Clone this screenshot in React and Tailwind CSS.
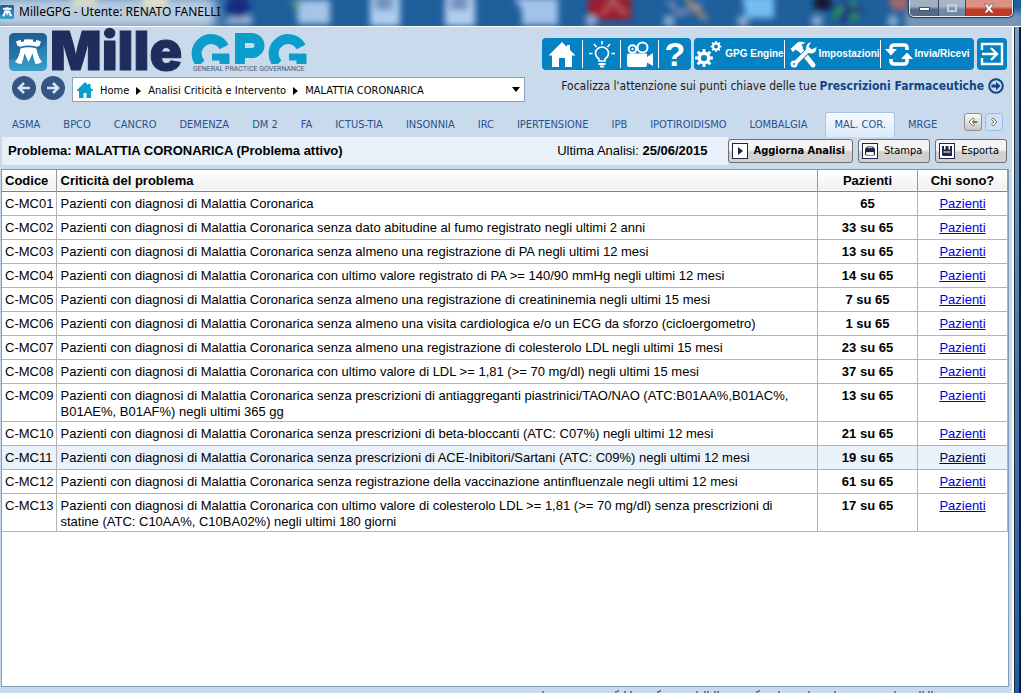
import React from "react";

const TABS = [
  "ASMA", "BPCO", "CANCRO", "DEMENZA", "DM 2", "FA", "ICTUS-TIA", "INSONNIA", "IRC",
  "IPERTENSIONE", "IPB", "IPOTIROIDISMO", "LOMBALGIA", "MAL. COR.", "MRGE",
];

const ROWS = [
  ["C-MC01", "Pazienti con diagnosi di Malattia Coronarica", "65"],
  ["C-MC02", "Pazienti con diagnosi di Malattia Coronarica senza dato abitudine al fumo registrato negli ultimi 2 anni", "33 su 65"],
  ["C-MC03", "Pazienti con diagnosi di Malattia Coronarica senza almeno una registrazione di PA negli ultimi 12 mesi", "13 su 65"],
  ["C-MC04", "Pazienti con diagnosi di Malattia Coronarica con ultimo valore registrato di PA >= 140/90 mmHg negli ultimi 12 mesi", "14 su 65"],
  ["C-MC05", "Pazienti con diagnosi di Malattia Coronarica senza almeno una registrazione di creatininemia negli ultimi 15 mesi", "7 su 65"],
  ["C-MC06", "Pazienti con diagnosi di Malattia Coronarica senza almeno una visita cardiologica e/o un ECG da sforzo (cicloergometro)", "1 su 65"],
  ["C-MC07", "Pazienti con diagnosi di Malattia Coronarica senza almeno una registrazione di colesterolo LDL negli ultimi 15 mesi", "23 su 65"],
  ["C-MC08", "Pazienti con diagnosi di Malattia Coronarica con ultimo valore di LDL >= 1,81 (>= 70 mg/dl) negli ultimi 15 mesi", "37 su 65"],
  ["C-MC09", "Pazienti con diagnosi di Malattia Coronarica senza prescrizioni di antiaggreganti piastrinici/TAO/NAO (ATC:B01AA%,B01AC%, B01AE%, B01AF%) negli ultimi 365 gg", "13 su 65"],
  ["C-MC10", "Pazienti con diagnosi di Malattia Coronarica senza prescrizioni di beta-bloccanti (ATC: C07%) negli ultimi 12 mesi", "21 su 65"],
  ["C-MC11", "Pazienti con diagnosi di Malattia Coronarica senza prescrizioni di ACE-Inibitori/Sartani (ATC: C09%) negli ultimi 12 mesi", "19 su 65"],
  ["C-MC12", "Pazienti con diagnosi di Malattia Coronarica senza registrazione della vaccinazione antinfluenzale negli ultimi 12 mesi", "61 su 65"],
  ["C-MC13", "Pazienti con diagnosi di Malattia Coronarica con ultimo valore di colesterolo LDL >= 1,81 (>= 70 mg/dl) senza prescrizioni di statine (ATC: C10AA%, C10BA02%) negli ultimi 180 giorni", "17 su 65"],
];

function TowerIcon({ className, id }) {
  return (
    <svg viewBox="0 0 38 38" className={`shrink-0 ${className}`} aria-hidden="true">
      <defs>
        <linearGradient id={id} x1="0" y1="0" x2="0" y2="1">
          <stop offset="0" stopColor="#2068a0" />
          <stop offset="1" stopColor="#3a9fcb" />
        </linearGradient>
      </defs>
      <rect width="38" height="38" rx="5" fill={`url(#${id})`} />
      <path d="M0 27C12 26 30 20 38 9V5a5 5 0 0 0-5-5H5a5 5 0 0 0-5 5z" fill="#1a568c" opacity=".4" />
      <path
        d="M7 8.500q2.500-1.500 5-1.500v2l3-.6V6.600q4.500-.9 9 0v1.800l3 .6V7q2.500 0 5 1.500l-1.500 4.500-3 .8q-8-2.400-16 0l-3-.8z"
        fill="#fff"
      />
      <path d="M11.500 15.500q8-2.600 16 0 1 8 5.500 13.500-3 2-6.500 2-2-5-3-10.500L19.500 29l-4-8.500q-1 5.500-3 10.500-3.500 0-6.500-2 4.500-5.500 5.500-13.500z" fill="#fff" />
    </svg>
  );
}

function DesktopBlur() {
  return (
    <svg className="absolute inset-0 h-full w-full" preserveAspectRatio="none" viewBox="0 0 1021 26" aria-hidden="true">
      <defs>
        <filter id="soft" x="-20%" y="-50%" width="140%" height="200%"><feGaussianBlur stdDeviation="3" /></filter>
        <filter id="glow" x="-20%" y="-100%" width="140%" height="300%"><feGaussianBlur stdDeviation="8" /></filter>
      </defs>
      <rect width="1021" height="26" fill="#1f5f9c" />
      <rect x="-10" y="-4" width="226" height="34" fill="#b2c9df" filter="url(#glow)" />
      <g filter="url(#soft)">
        <rect x="-6" y="2" width="218" height="21" fill="#b9cde0" opacity=".8" />
        <rect x="72" y="-4" width="24" height="12" fill="#d8dcc8" />
        <rect x="142" y="-4" width="26" height="12" fill="#e0dfc9" />
        <path d="M222 24h30v-8h-20z" fill="#9fb9d8" />
        <ellipse cx="238" cy="7" rx="12" ry="11" fill="#172c80" />
        <path d="M296 0h34v24h-32z" fill="#a5c4e9" />
        <path d="M288 2h14l-3 8z" fill="#66a075" />
        <rect x="370" y="-4" width="30" height="30" fill="#b0cef0" />
        <rect x="375" y="-2" width="18" height="12" fill="#7190bd" />
        <rect x="445" y="-4" width="30" height="30" fill="#b0cef0" />
        <rect x="450" y="-2" width="18" height="12" fill="#7190bd" />
        <path d="M514-2h44v27h-36V10z" fill="#a3c3ea" />
        <rect x="588" y="-4" width="43" height="24" fill="#9c1f2a" />
        <path d="M602 14q8-8 11-15 4 11 14 14" stroke="#c66a74" strokeWidth="2.500" fill="none" />
        <path d="M586 16h10v10h-10zM664 16h10v10h-10zM738 16h10v10h-10zM812 16h10v10h-10zM888 16h10v10h-10z" fill="#8fafd2" />
        <path d="M668 0l12 14 22-10" stroke="#7d86b4" strokeWidth="5" fill="none" />
        <path d="M686-2l20 22" stroke="#b08c70" strokeWidth="5" />
        <path d="M742-4h32v22h-28z" fill="#75bdf1" />
        <rect x="814" y="-4" width="17" height="14" fill="#14182e" />
        <ellipse cx="846" cy="12" rx="16" ry="11" fill="#23377f" />
        <path d="M834 18l8-12M850 20l8-6M850 4h6" stroke="#2ba153" strokeWidth="5" />
        <path d="M888-4h20v14h-16z" fill="#a8686c" />
        <rect x="905" y="12" width="120" height="20" fill="#7595b8" />
      </g>
    </svg>
  );
}

function TitleBar() {
  return (
    <header className="relative flex h-[27px] shrink-0 overflow-hidden border-b border-white">
      <DesktopBlur />
      <div className="relative flex flex-1 items-center gap-1 pb-[2px] font-['Noto_Sans',sans-serif] text-[12px] leading-4 text-black">
        <TowerIcon className="h-[14px] w-[14px]" id="towerSmall" />
        <h1 className="whitespace-nowrap pl-px">MilleGPG - Utente: RENATO FANELLI</h1>
      </div>
      <div className="relative mr-2 flex h-[17px] overflow-hidden rounded-b-[5px] border border-t-0 border-[#e3edf6] shadow-[0_0_1px_1px_#26364a]">
        <button aria-label="Riduci a icona" className="flex w-[29px] items-end justify-center border-r border-[#3c4d61] bg-linear-to-b from-[#9fb0c2] from-40% to-[#536a84] to-60% pb-[5px]">
          <span className="h-[4px] w-[11px] border border-[#44505e] bg-white" />
        </button>
        <button aria-label="Ingrandisci" className="flex w-[27px] items-center justify-center border-r border-[#3c4d61] bg-linear-to-b from-[#a6b6c8] from-40% to-[#7189a4] to-60%">
          <span className="h-2 w-[10px] border-2 border-[#c3cfdb]" />
        </button>
        <button aria-label="Chiudi" className="flex w-[46px] items-center justify-center bg-linear-to-b from-[#dd9384] from-40% to-[#bf3a22] to-60%">
          <svg viewBox="0 0 12 10" className="h-[11px] w-3" aria-hidden="true">
            <path d="M1 .5h3l2 2.600L8 .5h3L7.800 5 11 9.500H8L6 7 4 9.500H1L4.200 5z" fill="#fff" stroke="#5a3a3a" strokeWidth=".6" />
          </svg>
        </button>
      </div>
    </header>
  );
}

function Logo() {
  return (
    <div className="flex h-[38px] w-[300px] gap-1" role="img" aria-label="MilleGPG">
      <TowerIcon className="h-[38px] w-[38px]" id="towerBig" />
      <div className="relative flex-1">
        <svg viewBox="0 0 258 40" className="h-10 w-[258px] overflow-visible" aria-hidden="true">
          <text x="-1" y="37" fontFamily="Inter" fontWeight="900" fontSize="54" fill="#1f2c5c" stroke="#1f2c5c" strokeWidth="1">Mille</text>
          <clipPath id="gpgClip"><rect x="138" y="-1" width="125" height="32" /></clipPath>
          <g clipPath="url(#gpgClip)" fill="none" stroke="#0b9dcc">
            <path d="M173 14A14.500 14.500 0 1 0 150 31" strokeWidth="10" />
            <path d="M161 24h17" strokeWidth="7" />
            <path d="M173.500 21v11" strokeWidth="10" />
            <path d="M189 34V5h12a7.500 7.500 0 0 1 0 15h-12" strokeWidth="10" />
            <path d="M250 14A14.500 14.500 0 1 0 227 31" strokeWidth="10" />
            <path d="M238 24h17" strokeWidth="7" />
            <path d="M250.500 21v11" strokeWidth="10" />
          </g>
        </svg>
        <span className="absolute top-[32px] left-[142px] whitespace-nowrap font-['Roboto',sans-serif] text-[7px] leading-[8px] text-[#4d566b]">
          GENERAL PRACTICE GOVERNANCE
        </span>
      </div>
    </div>
  );
}

const S = "h-8 shrink-0";

function HomeIcon() {
  return (
    <svg viewBox="0 0 28 32" className={`${S} w-7`} aria-hidden="true">
      <path d="M14 4l5 5V7h3v5l5.500 5.500H24V29h-7v-9h-6v9H4V17.500H.5z" fill="#fff" />
    </svg>
  );
}
function BulbIcon() {
  return (
    <svg viewBox="0 0 28 32" className={`${S} w-7`} aria-hidden="true" fill="none" stroke="#fff" strokeWidth="1.600">
      <path d="M11 23v-2c-2-1.500-3.500-3-3.500-5.500a6.500 6.500 0 0 1 13 0c0 2.500-1.500 4-3.500 5.500v2z" />
      <path d="M10.500 26h7M12 28.500h4" strokeWidth="2" />
      <path d="M14 3v3.500M6 6l2.500 3M22 6l-2.500 3M1 15.500h3.500M23.500 15.500H27" />
    </svg>
  );
}
function CameraIcon() {
  return (
    <svg viewBox="0 0 28 32" className={`${S} w-7`} aria-hidden="true">
      <g fill="none" stroke="#fff" strokeWidth="2">
        <circle cx="6.500" cy="11" r="3.800" />
        <circle cx="16.500" cy="9.500" r="5" />
      </g>
      <circle cx="6.500" cy="11" r="1.200" fill="#fff" />
      <path d="M3 15.500h17q1 0 1 1V19l6-4v13l-6-3.500V27q0 2-2 2H3q-2 0-2-2V17.500q0-2 2-2z" fill="#fff" />
    </svg>
  );
}
function Gear({ cx, cy, r, w }) {
  const teeth = [0, 45, 90, 135, 180, 225, 270, 315];
  return (
    <g>
      <circle cx={cx} cy={cy} r={r} fill="none" stroke="#fff" strokeWidth={w} />
      {teeth.map((a) => (
        <rect key={a} x={cx - w * 0.45} y={cy - r - w * 1.2} width={w * 0.9} height={w * 1.1} fill="#fff" transform={`rotate(${a} ${cx} ${cy})`} />
      ))}
    </g>
  );
}
function GearsIcon() {
  return (
    <svg viewBox="0 0 28 32" className={`${S} w-7`} aria-hidden="true">
      <Gear cx={10} cy={20} r={4.8} w={3.4} />
      <Gear cx={22} cy={8.5} r={3} w={2} />
    </svg>
  );
}
function ToolsIcon() {
  return (
    <svg viewBox="0 0 28 32" className={`${S} w-7`} aria-hidden="true">
      <path d="M11 11L24 27" stroke="#fff" strokeWidth="5" strokeLinecap="round" />
      <path d="M1.500 11L9 4q4-1 7.500 1l-4 1.500 1.500 3-4.500 4-3-2-2.500 2.500z" fill="#fff" />
      <path d="M20 11.500L5 26.500" stroke="#0681c2" strokeWidth="6" />
      <path d="M20 11.500L5 26.500" stroke="#fff" strokeWidth="4" strokeLinecap="round" />
      <path d="M22 4l-2.500 5 3 2.500 5-2.500q0 6-5 6.500-3 0-4.500-2-2-3-.5-6 1.500-3 4.500-3.500z" fill="#fff" />
      <circle cx="5" cy="26" r="3.500" fill="#fff" /><circle cx="5" cy="26" r="1" fill="#0681c2" />
    </svg>
  );
}
function SyncIcon() {
  return (
    <svg viewBox="0 0 28 32" className={`${S} w-7`} aria-hidden="true">
      <g fill="none" stroke="#fff" strokeWidth="3.600">
        <path d="M6 14v-4q0-3 3-3h10q3 0 3 3v2" />
        <path d="M22 18v5q0 3-3 3H9q-3 0-3-3v-2" />
      </g>
      <path d="M0 11h12l-6 6.500zM16 21l6-6.500 6 6.500z" fill="#fff" />
    </svg>
  );
}
function ExitIcon() {
  return (
    <svg viewBox="0 0 28 32" className={`${S} w-7`} aria-hidden="true" fill="none" stroke="#fff" strokeWidth="2.400">
      <path d="M4 12V6h20v20H4v-6" />
      <path d="M4 16h14M13 10l6 6-6 6" />
    </svg>
  );
}

function Toolbar() {
  const group = "flex h-8 items-center rounded-[4px] bg-[#0681c2] text-white";
  const cell = "flex h-8 items-center justify-center whitespace-nowrap";
  const sep = "h-7 w-px shrink-0 bg-white";
  return (
    <nav aria-label="Strumenti" className="flex gap-[3px] font-['Liberation_Sans',Arial,sans-serif] text-[10px] leading-4 font-bold">
      <div className={group}>
        <button aria-label="Home" className={`${cell} w-10`}><HomeIcon /></button>
        <span className={sep} />
        <button aria-label="Suggerimenti" className={`${cell} w-[37px]`}><BulbIcon /></button>
        <span className={sep} />
        <button aria-label="Video" className={`${cell} w-[37px]`}><CameraIcon /></button>
        <span className={sep} />
        <button className={`${cell} w-8 text-[34px] leading-8`}>?</button>
      </div>
      <div className={group}>
        <button className={`${cell} w-[90px] gap-[3px]`}><GearsIcon />GPG Engine</button>
        <span className={sep} />
        <button className={`${cell} w-[95px] gap-px pl-1`}><ToolsIcon />Impostazioni</button>
        <span className={sep} />
        <button className={`${cell} w-[93px] gap-px`}><SyncIcon />Invia/Ricevi</button>
      </div>
      <div className={group}>
        <button aria-label="Esci" className={`${cell} w-[30px]`}><ExitIcon /></button>
      </div>
    </nav>
  );
}

function RoundArrow({ left }) {
  return (
    <button aria-label={left ? "Indietro" : "Avanti"}>
      <svg viewBox="0 0 24 24" className="-mt-[3px] h-6 w-6" aria-hidden="true">
        <circle cx="12" cy="12" r="12" fill="#375583" />
        <path d={left ? "M18 12H8M12 7l-5 5 5 5" : "M6 12h10M12 7l5 5-5 5"} stroke="#d5e4f2" strokeWidth="2.600" fill="none" />
      </svg>
    </button>
  );
}

function Caret() {
  return <svg viewBox="0 0 5 8" className="h-2 w-[5px]" aria-hidden="true"><path d="M0 0l5 4-5 4z" fill="#000" /></svg>;
}

function Breadcrumb() {
  return (
    <nav aria-label="Percorso" className="flex h-[25px] w-[453px] items-center border border-[#8da3b9] bg-white pl-1 text-[11px] leading-4 text-black">
      <svg viewBox="0 0 16 16" className="mr-[7px] h-4 w-4" aria-hidden="true">
        <path d="M8 0l3 3V2h2.500v3.500L16 8v1h-2v7H9.500v-5h-3v5H2V9H0V8z" fill="#0b9dcc" />
      </svg>
      <div className="flex flex-1 items-center gap-[7px] pt-[2px]">
        <a href="#home">Home</a>
        <Caret />
        <a href="#analisi">Analisi Criticità e Intervento</a>
        <Caret />
        <span>MALATTIA CORONARICA</span>
      </div>
      <button aria-label="Apri elenco" className="flex h-full w-[17px] items-center justify-center">
        <svg viewBox="0 0 8 5" className="h-[5px] w-2" aria-hidden="true"><path d="M0 0h8L4 5z" fill="#000" /></svg>
      </button>
    </nav>
  );
}

function TabStrip() {
  return (
    <div className="mt-[10px] flex h-[25px] items-stretch pl-px text-[11px] leading-6 text-[#2b518c]">
      <div role="tablist" className="flex flex-1 items-stretch whitespace-nowrap">
        {TABS.map((t) => {
          const on = t === "MAL. COR.";
          return (
            <button
              key={t}
              role="tab"
              aria-selected={on}
              className={
                on
                  ? "mr-[2px] ml-[6px] rounded-t-[3px] border border-b-0 border-[#a5c3e4] bg-linear-to-b from-[#f4f9fe] to-[#deebf8] px-2"
                  : "pr-3 pl-[11px]"
              }
            >
              {t}
            </button>
          );
        })}
      </div>
      <div className="mr-[9px] flex gap-[3px] self-start pt-px">
        <button aria-label="Schede precedenti" className="flex h-[18px] w-[18px] items-center justify-center rounded-[3px] border border-[#8e8e8e] bg-linear-to-b from-[#fafafa] to-[#c6c6c6]">
          <svg viewBox="0 0 10 10" className="h-[10px] w-[10px]" fill="#fff" stroke="#7a7458" strokeWidth="1" aria-hidden="true"><path d="M5 1L1 5l4 4 1.500-1.500L4.500 5.500H9v-1H4.500L6.500 2.500z" /></svg>
        </button>
        <button aria-label="Schede successive" className="flex h-[18px] w-[18px] items-center justify-center rounded-[3px] border border-[#9dbce0] bg-[#cfe0f4]">
          <svg viewBox="0 0 10 10" className="h-[10px] w-[10px]" fill="#fff" stroke="#7a7458" strokeWidth="1" aria-hidden="true"><path d="M4 1l4 4-4 4-1.500-1.500L5 5 2.500 2.500z" /></svg>
        </button>
      </div>
    </div>
  );
}

function ActionButton({ children, icon, className = "" }) {
  return (
    <button className={`flex h-6 items-center gap-[6px] rounded-[3px] border border-[#707070] bg-linear-to-b from-[#f4f4f4] from-45% to-[#d0d0d0] to-55% pr-[7px] pl-[3px] text-[11px] text-black ${className}`}>
      <svg viewBox="0 0 16 16" className="h-4 w-4" aria-hidden="true">
        <rect x=".5" y=".5" width="15" height="15" fill="#fff" stroke="#1c2747" />
        {icon}
      </svg>
      {children}
    </button>
  );
}

function InfoBar() {
  return (
    <div className="mx-[2px] mb-1 flex h-7 items-center bg-[#e8f1fa]">
      <h2 className="flex-1 pl-[6px] font-['Liberation_Sans',Arial,sans-serif] text-[13px] font-bold text-black">
        Problema: MALATTIA CORONARICA (Problema attivo)
      </h2>
      <p className="pr-5 font-['Liberation_Sans',Arial,sans-serif] text-[13px] text-black">
        Ultima Analisi: <b>25/06/2015</b>
      </p>
      <div className="flex h-7 items-center gap-[5px] bg-[#c9daec] pr-[3px]">
        <ActionButton className="font-bold" icon={<path d="M6 4l5 4-5 4z" fill="#1c2747" />}>Aggiorna Analisi</ActionButton>
        <ActionButton icon={<g><path d="M5 3.500h6l2 2.500v5.500l-1 1H4l-1-1V6z" fill="#1c2747" /><path d="M5.500 4.700h5M4.500 9.500h7v2h-7z" fill="#fff" stroke="#fff" strokeWidth=".8" /></g>}>Stampa</ActionButton>
        <ActionButton icon={<g><path d="M3 3h10v10H4l-1-1z" fill="#1c2747" /><path d="M5 3h1.500v3.500H5zM9.500 3H11v3.500H9.500zM4.500 8.500h7v1h-7z" fill="#fff" /></g>}>Esporta</ActionButton>
      </div>
    </div>
  );
}

function CriteriaTable() {
  const line = "border-b border-[#b4b4b4]";
  const cell = "pt-1 pb-px align-top";
  return (
    <table className="w-full table-fixed border-collapse font-['Liberation_Sans',Arial,sans-serif] text-[13px] leading-4 text-black">
      <colgroup>
        <col className="w-[54px]" />
        <col />
        <col className="w-[100px]" />
        <col className="w-[90px]" />
      </colgroup>
      <thead>
        <tr className="h-[21px] border-b border-[#808080] bg-linear-to-b from-white to-[#f0f0f0] text-left">
          <th className="border-r border-[#9a9a9a] pt-[2px] pl-[3px]">Codice</th>
          <th className="border-r border-[#9a9a9a] pt-[2px] pl-[4px]">Criticità del problema</th>
          <th className="border-r border-[#9a9a9a] pt-[2px] text-center">Pazienti</th>
          <th className="border-r border-[#9a9a9a] pt-[2px] text-center">Chi sono?</th>
        </tr>
      </thead>
      <tbody>
        {ROWS.map(([code, text, n]) => {
          const on = code === "C-MC11";
          return (
            <tr key={code} className={`h-6 ${line} ${on ? "bg-[#e9f2fb]" : ""}`}>
              <td className={`${cell} border-r border-[#b4b4b4] pl-[3px] whitespace-nowrap`}>{code}</td>
              <td className={`${cell} border-r border-[#b4b4b4] pr-5 pl-[4px]`}>{text}</td>
              <td className={`${cell} border-r border-[#b4b4b4] text-center font-bold`}>{n}</td>
              <td className={`${cell} border-r border-[#b4b4b4] text-center`}>
                <a href={`#${code}`} className={`underline ${on ? "text-[#000050]" : "text-[#0000d0]"}`}>Pazienti</a>
              </td>
            </tr>
          );
        })}
      </tbody>
    </table>
  );
}

export default function App() {
  return (
    <div className="flex h-screen flex-col overflow-hidden bg-[#c9daec] font-['DejaVu_Sans_Condensed','DejaVu_Sans',Tahoma,sans-serif]">
      <TitleBar />
      <div className="flex min-h-0 flex-1">
        <main className="flex min-w-0 flex-1 flex-col">
          <div className="flex h-[75px] items-start justify-between pt-[6px] pr-[5px] pl-[9px]">
            <div>
              <Logo />
              <div className="mt-[6px] flex gap-[5px] pl-[3px]">
                <RoundArrow left />
                <RoundArrow />
                <div className="pl-[2px]"><Breadcrumb /></div>
              </div>
            </div>
            <div className="flex flex-col items-end pt-[5px]">
              <Toolbar />
              <p className="mt-[6px] flex items-center pr-[3px] text-[12px] leading-5 whitespace-nowrap text-[#1a1a1a]">
                Focalizza l'attenzione sui punti chiave delle tue
                <a href="#prescrizioni" className="flex items-center gap-1 pl-[3px] font-bold text-[#0f4686]">
                  Prescrizioni Farmaceutiche
                  <svg viewBox="0 0 16 16" className="h-4 w-4" aria-hidden="true">
                    <circle cx="8" cy="8" r="6.800" fill="none" stroke="#0f4686" strokeWidth="2" />
                    <path d="M3.500 6.500H8V3.800L12.500 8 8 12.200V9.500H3.500z" fill="#0f4686" />
                  </svg>
                </a>
              </p>
            </div>
          </div>
          <TabStrip />
          <InfoBar />
          <section className="mr-[3px] ml-px min-h-0 flex-1 border border-[#7f9db9] border-t-[#7b95ae] bg-white">
            <CriteriaTable />
          </section>
          <footer className="h-[6px] shrink-0 overflow-hidden">
            <svg viewBox="0 0 1011 6" className="h-[6px] w-[1011px]" aria-hidden="true">
              <path d="M543 4v2M617 4h2M616 4v2M625 4v2M631 4v2M659 4h2M658 4v2M697 4v2M705 4v2M708 4v2M715 4v2M718 4v2M758 4h2M757 4v2M779 4v2M809 4v2M835 4v2M895 4v2M920 4v2M923 4v2M929 4v2M932 4v2" stroke="#1f2a3a" strokeWidth="1" />
            </svg>
          </footer>
        </main>
        <div className="flex w-[9px] shrink-0" aria-hidden="true">
          <span className="w-[2px] bg-white" />
          <span className="w-px bg-[#1b2b40]" />
          <span className="w-[4px] bg-linear-to-b from-[#7f9dbf] via-[#4d77a8] to-[#1f5f9c]" />
          <span className="w-[2px] bg-[#071a38]" />
        </div>
      </div>
    </div>
  );
}
